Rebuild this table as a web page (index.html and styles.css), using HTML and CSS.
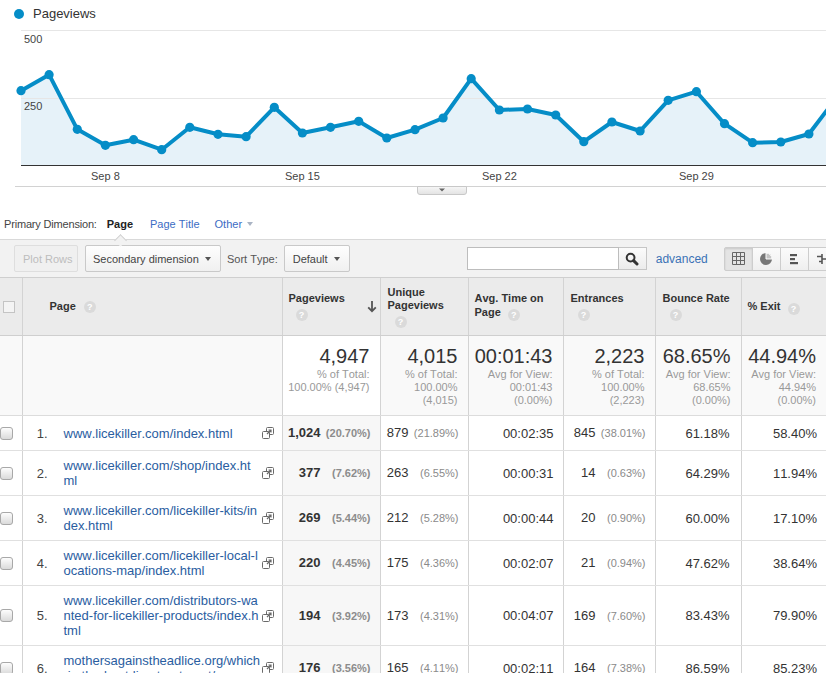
FILE: index.html
```html
<!DOCTYPE html>
<html>
<head>
<meta charset="utf-8">
<title>Pages report</title>
<link rel="stylesheet" href="styles.css">
</head>
<body>
<svg class="defs" width="0" height="0" aria-hidden="true">
  <defs>
    <symbol id="ext" viewBox="0 0 12 12">
      <rect x="4.5" y="0.5" width="7" height="7" rx="1" fill="#fff" stroke="#6a6a6a"/>
      <rect x="0.5" y="4.5" width="7" height="7" rx="1" fill="#fff" stroke="#6a6a6a"/>
      <path d="M5 7 L9 3 M6.5 3 H9 V5.5" fill="none" stroke="#6a6a6a" stroke-width="1.2"/>
    </symbol>
  </defs>
</svg>
<div class="page">
  <section class="chart">
    <div class="legend"><span class="dot"></span><span class="legend-label">Pageviews</span></div>
    <svg class="plot" width="826" height="183" viewBox="0 0 826 183">
      <defs>
        <linearGradient id="tabg" x1="0" y1="0" x2="0" y2="1">
          <stop offset="0" stop-color="#f7f7f7"/>
          <stop offset="1" stop-color="#e2e2e2"/>
        </linearGradient>
      </defs>
      <path class="area" d="M21,143 L21,68.7 L49.1,52.7 L77.3,107.3 L105.4,123.3 L133.6,117.7 L161.7,127.7 L189.8,105.3 L218,112.3 L246.1,114.7 L274.3,85.3 L302.4,111 L330.5,105.3 L358.7,99.3 L386.8,116 L415,107.7 L443.1,96 L471.2,56.7 L499.4,88 L527.5,87 L555.7,93 L583.8,119.7 L611.9,100 L640.1,109 L668.2,78.3 L696.4,69.7 L724.5,101.7 L752.6,120.7 L780.8,120 L808.9,112 L837.1,75 L837.1,143 Z"/>
      <line class="grid" x1="21" y1="8.5" x2="826" y2="8.5"/>
      <line class="grid" x1="21" y1="76.5" x2="826" y2="76.5"/>
      <line class="base" x1="21" y1="143.5" x2="826" y2="143.5"/>
      <polyline class="line" points="21,68.7 49.1,52.7 77.3,107.3 105.4,123.3 133.6,117.7 161.7,127.7 189.8,105.3 218,112.3 246.1,114.7 274.3,85.3 302.4,111 330.5,105.3 358.7,99.3 386.8,116 415,107.7 443.1,96 471.2,56.7 499.4,88 527.5,87 555.7,93 583.8,119.7 611.9,100 640.1,109 668.2,78.3 696.4,69.7 724.5,101.7 752.6,120.7 780.8,120 808.9,112 837.1,75"/>
      <g class="pts">
        <circle cx="21" cy="68.7" r="4.6"/><circle cx="49.1" cy="52.7" r="4.6"/><circle cx="77.3" cy="107.3" r="4.6"/>
        <circle cx="105.4" cy="123.3" r="4.6"/><circle cx="133.6" cy="117.7" r="4.6"/><circle cx="161.7" cy="127.7" r="4.6"/>
        <circle cx="189.8" cy="105.3" r="4.6"/><circle cx="218" cy="112.3" r="4.6"/><circle cx="246.1" cy="114.7" r="4.6"/>
        <circle cx="274.3" cy="85.3" r="4.6"/><circle cx="302.4" cy="111" r="4.6"/><circle cx="330.5" cy="105.3" r="4.6"/>
        <circle cx="358.7" cy="99.3" r="4.6"/><circle cx="386.8" cy="116" r="4.6"/><circle cx="415" cy="107.7" r="4.6"/>
        <circle cx="443.1" cy="96" r="4.6"/><circle cx="471.2" cy="56.7" r="4.6"/><circle cx="499.4" cy="88" r="4.6"/>
        <circle cx="527.5" cy="87" r="4.6"/><circle cx="555.7" cy="93" r="4.6"/><circle cx="583.8" cy="119.7" r="4.6"/>
        <circle cx="611.9" cy="100" r="4.6"/><circle cx="640.1" cy="109" r="4.6"/><circle cx="668.2" cy="78.3" r="4.6"/>
        <circle cx="696.4" cy="69.7" r="4.6"/><circle cx="724.5" cy="101.7" r="4.6"/><circle cx="752.6" cy="120.7" r="4.6"/>
        <circle cx="780.8" cy="120" r="4.6"/><circle cx="808.9" cy="112" r="4.6"/><circle cx="837.1" cy="75" r="4.6"/>
      </g>
      <text class="ylab" x="24" y="21">500</text>
      <text class="ylab" x="24" y="88">250</text>
      <text class="xlab" x="105.4" y="158">Sep 8</text>
      <text class="xlab" x="302.4" y="158">Sep 15</text>
      <text class="xlab" x="499.4" y="158">Sep 22</text>
      <text class="xlab" x="696.4" y="158">Sep 29</text>
      <line class="rule" x1="15" y1="164.5" x2="826" y2="164.5"/>
      <path class="tab" d="M417.5,164.5 H466.5 V170 Q466.5,172.5 464,172.5 H420 Q417.5,172.5 417.5,170 Z"/>
      <polygon class="tabtri" points="439,166.5 445,166.5 442,169.5"/>
    </svg>
  </section>

  <div class="dimbar">
    <span class="dim-label">Primary Dimension:</span>
    <span class="dim-active">Page</span>
    <a class="dim-link">Page Title</a>
    <a class="dim-link other">Other<span class="caret-light"></span></a>
  </div>

  <div class="toolbar">
    <span class="notch"></span>
    <div class="btn plot">Plot Rows</div>
    <div class="btn sec">Secondary dimension<span class="caret"></span></div>
    <span class="sort-label">Sort Type:</span>
    <div class="btn def">Default<span class="caret"></span></div>
    <div class="search">
      <div class="search-input"></div>
      <div class="search-btn">
        <svg width="14" height="14" viewBox="0 0 14 14"><circle cx="5.6" cy="5.6" r="3.9" fill="none" stroke="#333" stroke-width="2"/><path d="M8.6 8.6 L12 12" stroke="#333" stroke-width="3" stroke-linecap="round"/></svg>
      </div>
    </div>
    <a class="advanced">advanced</a>
    <div class="views">
      <div class="vbtn active">
        <svg width="13" height="13" viewBox="0 0 13 13"><path d="M.5 .5h12v12h-12z M4.5 .5v12 M8.5 .5v12 M.5 4.5h12 M.5 8.5h12" fill="none" stroke="#666"/></svg>
      </div>
      <div class="vbtn">
        <svg width="14" height="14" viewBox="0 0 14 14"><circle cx="7" cy="7" r="6" fill="#777"/><path d="M7 7 V1 A6 6 0 0 1 13 7 Z" fill="#c4c4c4" stroke="#fff" stroke-width="1"/></svg>
      </div>
      <div class="vbtn">
        <svg width="10" height="12" viewBox="0 0 10 12"><rect x="1" y="1" width="7" height="2.2" fill="#555"/><rect x="1" y="5" width="5" height="2.2" fill="#555"/><rect x="1" y="9" width="8" height="2.2" fill="#555"/></svg>
      </div>
      <div class="vbtn">
        <svg width="12" height="12" viewBox="0 0 12 12"><path d="M6 1 V11 M1 3.5 H6 M6 6 H11 M3 8.5 H6" fill="none" stroke="#555" stroke-width="1.6"/></svg>
      </div>
    </div>
  </div>

  <table class="report">
    <colgroup>
      <col class="c-cb"><col class="c-pg"><col class="c-pv"><col class="c-up"><col class="c-at"><col class="c-en"><col class="c-br"><col class="c-ex">
    </colgroup>
    <thead>
      <tr>
        <th class="cbh"><span class="chk-h"></span></th>
        <th class="ph">Page<span class="q">?</span></th>
        <th class="mh"><div class="hd"><div>Pageviews<br><span class="q">?</span></div><svg class="sort" width="10" height="13" viewBox="0 0 10 13"><path d="M5 1 V11 M1.2 7.3 L5 11.2 L8.8 7.3" fill="none" stroke="#555" stroke-width="1.8"/></svg></div></th>
        <th class="mh">Unique<br>Pageviews<br><span class="q">?</span></th>
        <th class="mh">Avg. Time on<br>Page<span class="q">?</span></th>
        <th class="mh">Entrances<br><span class="q">?</span></th>
        <th class="mh">Bounce Rate<br><span class="q">?</span></th>
        <th class="mh">% Exit<span class="q">?</span></th>
      </tr>
    </thead>
    <tbody>
      <tr class="totals">
        <td></td>
        <td></td>
        <td class="pv"><div class="big">4,947</div><div class="sub">% of Total:<br>100.00% (4,947)</div></td>
        <td><div class="big">4,015</div><div class="sub">% of Total:<br>100.00%<br>(4,015)</div></td>
        <td><div class="big">00:01:43</div><div class="sub">Avg for View:<br>00:01:43<br>(0.00%)</div></td>
        <td><div class="big">2,223</div><div class="sub">% of Total:<br>100.00%<br>(2,223)</div></td>
        <td><div class="big">68.65%</div><div class="sub">Avg for View:<br>68.65%<br>(0.00%)</div></td>
        <td><div class="big">44.94%</div><div class="sub">Avg for View:<br>44.94%<br>(0.00%)</div></td>
      </tr>
      <tr>
        <td class="cb"><span class="chk"></span></td>
        <td class="pg"><div class="pgw"><span class="num">1.</span><span class="url">www.licekiller.com/index.html</span><svg class="ext" width="12" height="12"><use href="#ext"/></svg></div></td>
        <td class="pv"><span class="v">1,024</span><span class="p">(20.70%)</span></td>
        <td><span class="v">879</span><span class="p">(21.89%)</span></td>
        <td>00:02:35</td>
        <td><span class="v">845</span><span class="p">(38.01%)</span></td>
        <td class="brc">61.18%</td>
        <td>58.40%</td>
      </tr>
      <tr>
        <td class="cb"><span class="chk"></span></td>
        <td class="pg"><div class="pgw"><span class="num">2.</span><span class="url">www.licekiller.com/shop/index.html</span><svg class="ext" width="12" height="12"><use href="#ext"/></svg></div></td>
        <td class="pv"><span class="v">377</span><span class="p">(7.62%)</span></td>
        <td><span class="v">263</span><span class="p">(6.55%)</span></td>
        <td>00:00:31</td>
        <td><span class="v">14</span><span class="p">(0.63%)</span></td>
        <td class="brc">64.29%</td>
        <td>11.94%</td>
      </tr>
      <tr>
        <td class="cb"><span class="chk"></span></td>
        <td class="pg"><div class="pgw"><span class="num">3.</span><span class="url">www.licekiller.com/licekiller-kits/index.html</span><svg class="ext" width="12" height="12"><use href="#ext"/></svg></div></td>
        <td class="pv"><span class="v">269</span><span class="p">(5.44%)</span></td>
        <td><span class="v">212</span><span class="p">(5.28%)</span></td>
        <td>00:00:44</td>
        <td><span class="v">20</span><span class="p">(0.90%)</span></td>
        <td class="brc">60.00%</td>
        <td>17.10%</td>
      </tr>
      <tr>
        <td class="cb"><span class="chk"></span></td>
        <td class="pg"><div class="pgw"><span class="num">4.</span><span class="url">www.licekiller.com/licekiller-local-locations-map/index.html</span><svg class="ext" width="12" height="12"><use href="#ext"/></svg></div></td>
        <td class="pv"><span class="v">220</span><span class="p">(4.45%)</span></td>
        <td><span class="v">175</span><span class="p">(4.36%)</span></td>
        <td>00:02:07</td>
        <td><span class="v">21</span><span class="p">(0.94%)</span></td>
        <td class="brc">47.62%</td>
        <td>38.64%</td>
      </tr>
      <tr>
        <td class="cb"><span class="chk"></span></td>
        <td class="pg"><div class="pgw"><span class="num">5.</span><span class="url">www.licekiller.com/distributors-wanted-for-licekiller-products/index.html</span><svg class="ext" width="12" height="12"><use href="#ext"/></svg></div></td>
        <td class="pv"><span class="v">194</span><span class="p">(3.92%)</span></td>
        <td><span class="v">173</span><span class="p">(4.31%)</span></td>
        <td>00:04:07</td>
        <td><span class="v">169</span><span class="p">(7.60%)</span></td>
        <td class="brc">83.43%</td>
        <td>79.90%</td>
      </tr>
      <tr>
        <td class="cb"><span class="chk"></span></td>
        <td class="pg"><div class="pgw"><span class="num">6.</span><span class="url">mothersagainstheadlice.org/which-is-the-best-lice-treatment/</span><svg class="ext" width="12" height="12"><use href="#ext"/></svg></div></td>
        <td class="pv"><span class="v">176</span><span class="p">(3.56%)</span></td>
        <td><span class="v">165</span><span class="p">(4.11%)</span></td>
        <td>00:02:11</td>
        <td><span class="v">164</span><span class="p">(7.38%)</span></td>
        <td class="brc">86.59%</td>
        <td>85.23%</td>
      </tr>
    </tbody>
  </table>
</div>
</body>
</html>
```
FILE: styles.css
```css
html, body {
  margin: 0;
  padding: 0;
  background: #fff;
}
body {
  font-family: "Liberation Sans", Arial, sans-serif;
  font-kerning: none;
  color: #333;
  width: 826px;
  overflow: hidden;
}
.defs {
  position: absolute;
  width: 0;
  height: 0;
}
.page {
  width: 826px;
  overflow: hidden;
}

/* chart */
.chart {
  height: 205px;
}
.legend {
  box-sizing: border-box;
  height: 22px;
  padding: 6px 0 0 14px;
  display: flex;
  align-items: center;
}
.dot {
  width: 10px;
  height: 10px;
  border-radius: 50%;
  background: #058dc7;
}
.legend-label {
  margin-left: 9px;
  font-size: 13px;
  line-height: 16px;
  color: #333;
}
.plot {
  display: block;
}
.plot .area {
  fill: #e6f2f9;
}
.plot .grid {
  stroke: #e6e6e6;
  stroke-width: 1;
}
.plot .base {
  stroke: #333;
  stroke-width: 1;
}
.plot .line {
  fill: none;
  stroke: #058dc7;
  stroke-width: 4;
  stroke-linejoin: round;
}
.plot .pts circle {
  fill: #058dc7;
}
.plot .ylab {
  font-size: 11px;
  fill: #444;
}
.plot .xlab {
  font-size: 11px;
  fill: #444;
  text-anchor: middle;
}
.plot .rule {
  stroke: #d2d2d2;
  stroke-width: 1;
}
.plot .tab {
  fill: url(#tabg);
  stroke: #c8c8c8;
  stroke-width: 1;
}
.plot .tabtri {
  fill: #666;
}

/* primary dimension */
.dimbar {
  box-sizing: border-box;
  height: 34px;
  padding: 4px 0 0 4px;
  display: flex;
  align-items: center;
  font-size: 11px;
}
.dim-label {
  color: #444;
  letter-spacing: -0.18px;
}
.dim-active {
  margin-left: 10px;
  font-weight: bold;
  color: #222;
}
.dim-link {
  margin-left: 17px;
  color: #3c6cc4;
}
.dim-link.other {
  margin-left: 15px;
  display: flex;
  align-items: center;
}
.caret-light {
  margin-left: 5px;
  width: 0;
  height: 0;
  border-top: 4px solid #aab4c4;
  border-left: 3.5px solid transparent;
  border-right: 3.5px solid transparent;
}

/* toolbar */
.toolbar {
  position: relative;
  box-sizing: border-box;
  height: 38px;
  border-top: 1px solid #d9d9d9;
  background: #f2f2f2;
  display: flex;
  align-items: center;
  padding-left: 14px;
  font-size: 11px;
}
.toolbar > * {
  flex-shrink: 0;
}
.notch {
  position: absolute;
  left: 116px;
  top: -4px;
  box-sizing: border-box;
  width: 9px;
  height: 9px;
  background: #f2f2f2;
  border-left: 1px solid #d0d0d0;
  border-top: 1px solid #d0d0d0;
  transform: rotate(45deg);
}
.btn {
  box-sizing: border-box;
  height: 27px;
  border: 1px solid #c9c9c9;
  border-radius: 2px;
  background: linear-gradient(#fefefe, #f0f0f0);
  color: #444;
  display: flex;
  align-items: center;
  padding-left: 7px;
}
.btn.plot {
  width: 64px;
  padding-left: 8px;
  color: #bdbdbd;
  border-color: #dedede;
  background: #f0f0f0;
}
.btn.sec {
  width: 136px;
  margin-left: 7px;
}
.btn.def {
  width: 66px;
  margin-left: 6px;
  padding-left: 8px;
}
.caret {
  margin-left: auto;
  margin-right: 9px;
  width: 0;
  height: 0;
  border-top: 4px solid #555;
  border-left: 3.5px solid transparent;
  border-right: 3.5px solid transparent;
}
.sort-label {
  margin-left: 6px;
  color: #555;
}
.search {
  margin-left: 117px;
  display: flex;
}
.search-input {
  box-sizing: border-box;
  width: 152px;
  height: 23px;
  border: 1px solid #bdbdbd;
  background: #fff;
}
.search-btn {
  box-sizing: border-box;
  width: 28px;
  height: 23px;
  border: 1px solid #c6c6c6;
  border-left: 0;
  background: linear-gradient(#fbfbfb, #ececec);
  display: flex;
  align-items: center;
  justify-content: center;
}
.advanced {
  margin-left: 9px;
  font-size: 12px;
  color: #3b72b6;
}
.views {
  margin-left: 16px;
  display: flex;
}
.vbtn {
  box-sizing: border-box;
  width: 29px;
  height: 24px;
  margin-left: -1px;
  border: 1px solid #cdcdcd;
  background: linear-gradient(#fbfbfb, #efefef);
  display: flex;
  align-items: center;
  justify-content: center;
}
.vbtn:first-child {
  margin-left: 0;
  border-radius: 2px 0 0 2px;
}
.vbtn.active {
  background: #e4e4e4;
  box-shadow: inset 0 1px 2px rgba(0, 0, 0, 0.12);
}

/* table */
.report {
  border-collapse: collapse;
  table-layout: fixed;
  width: 826px;
  font-size: 13px;
}
.c-cb { width: 22px; }
.c-pg { width: 260px; }
.c-pv { width: 98px; }
.c-up { width: 88px; }
.c-at { width: 95px; }
.c-en { width: 92px; }
.c-br { width: 86px; }
.c-ex { width: 85px; }

.report th,
.report td {
  border-left: 1px solid #d3d3d3;
}
.report th:first-child,
.report td:first-child {
  border-left: 0;
}
.report thead th {
  height: 57px;
  background: #ebebeb;
  border-top: 1px solid #cfcfcf;
  border-bottom: 1px solid #cfcfcf;
  font-size: 11px;
  font-weight: bold;
  line-height: 13px;
  color: #333;
  text-align: left;
  vertical-align: middle;
  padding: 0 6px 0 7px;
}
.report thead th.mh:nth-child(3),
.report thead th.mh:nth-child(5),
.report thead th.mh:nth-child(8) {
  padding-left: 6px;
}
.report thead th.cbh {
  padding: 0;
}
.chk-h {
  display: block;
  box-sizing: border-box;
  width: 12px;
  height: 12px;
  margin-left: 3px;
  border: 1px solid #c4c4c4;
  background: #f4f4f4;
}
.report thead th.ph {
  padding-left: 27px;
}
.q {
  display: inline-block;
  width: 12px;
  height: 12px;
  margin: 4px 0 0 7px;
  border-radius: 50%;
  background: #dadada;
  color: #fff;
  font-size: 9px;
  line-height: 12px;
  text-align: center;
  vertical-align: middle;
}
.ph .q {
  margin-top: 0;
  margin-left: 8px;
}
.hd {
  display: flex;
  justify-content: space-between;
  align-items: center;
}
.sort {
  margin-right: -3px;
  flex: none;
}

/* totals */
.report tr.totals td {
  height: 71px;
  padding: 8px 10px 0 4px;
  vertical-align: top;
  text-align: right;
  background: #f9f9f9;
  border-bottom: 1px solid #dcdcdc;
  white-space: nowrap;
}
.report tr.totals td.pv {
  background: #fff;
}
.big {
  font-size: 20px;
  line-height: 24px;
  color: #333;
}
.sub {
  font-size: 11px;
  line-height: 13px;
  color: #999;
}

/* rows */
.report tbody tr:not(.totals) td {
  height: 20px;
  padding: 7px 9px 7px 4px;
  line-height: 15px;
  vertical-align: middle;
  text-align: right;
  border-bottom: 1px solid #e0e0e0;
  color: #333;
  white-space: nowrap;
}
.report tbody tr:not(.totals) td.cb {
  padding: 7px 0;
  text-align: left;
}
.report tbody tr:not(.totals) td.pg {
  padding: 7px 8px 7px 0;
  text-align: left;
  white-space: normal;
}
.report tbody tr:not(.totals) td.pv {
  background: #f7f7f7;
}
.report tbody tr:not(.totals) td.brc {
  padding-right: 11px;
}
.chk {
  display: block;
  box-sizing: border-box;
  width: 13px;
  height: 13px;
  border: 1px solid #a8a8a8;
  border-radius: 3px;
  background: linear-gradient(#fdfdfd, #dadada);
}
.pgw {
  display: flex;
  align-items: center;
}
.num {
  flex: 0 0 25px;
  text-align: right;
  color: #444;
}
.url {
  flex: 0 0 197.2px;
  margin-left: 16px;
  word-break: break-all;
  color: #2a5d9f;
}
.ext {
  flex: none;
  margin-left: 1px;
}
.p {
  display: inline-block;
  width: 45px;
  margin-left: 5px;
  text-align: right;
  font-size: 11px;
  color: #8a8a8a;
}
.pv .v {
  font-weight: bold;
}
.pv .p {
  font-weight: bold;
  color: #8c8c8c;
}
```
